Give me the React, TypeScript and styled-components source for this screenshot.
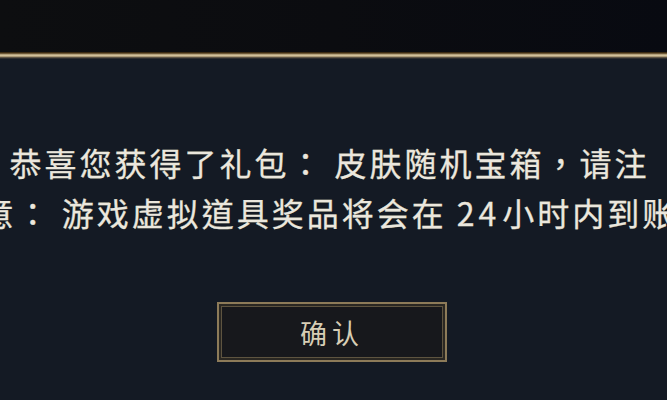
import React from "react";
import styled, { createGlobalStyle } from "styled-components";

const GlobalStyle = createGlobalStyle`
  html, body {
    margin: 0;
    padding: 0;
    background: #141a24;
    overflow: hidden;
  }
  #root {
    width: 667px;
    height: 400px;
  }
`;

const Screen = styled.div`
  width: 667px;
  height: 400px;
  display: flex;
  flex-direction: column;
  overflow: hidden;
  font-family: "Noto Sans CJK TC", "Noto Sans CJK SC", sans-serif;
`;

const TopBar = styled.div`
  height: 52px;
  flex-shrink: 0;
  background: linear-gradient(90deg, #0d0e10 0%, #0b0c10 50%, #080a11 100%);
`;

const GoldRule = styled.div`
  height: 7px;
  flex-shrink: 0;
  background: linear-gradient(
    180deg,
    #2a1d0c 0px,
    #4a3618 1px,
    #8f7a55 2px,
    #d9c9a4 3px,
    #cbb991 4px,
    #8c7b5e 5px,
    #2d2d2e 6px
  );
`;

const Dialog = styled.div`
  flex: 1;
  display: flex;
  flex-direction: column;
  align-items: center;
  background: #141a24;
  padding-top: 78px;
`;

const Message = styled.p`
  flex-shrink: 0;
  width: 706px;
  margin: 0 8px 0 0;
  text-align: center;
  color: #ebe7dd;
  font-size: 32px;
  line-height: 50px;
  letter-spacing: 3px;
  -webkit-text-stroke: 0.3px #ebe7dd;
`;

const Digits = styled.span`
  margin: 0 2px 0 10px;
  letter-spacing: 4px;
`;

const ConfirmButton = styled.button`
  margin: 65px 4px 0 0;
  width: 230px;
  height: 60px;
  box-sizing: border-box;
  background: #17181c;
  border: 2px solid #8d7b59;
  box-shadow: inset 0 0 0 2px #2a2722, inset 0 0 0 3px #5e5440;
  color: #d6cdb5;
  font-family: "Noto Sans CJK SC", sans-serif;
  font-size: 27px;
  letter-spacing: 5px;
  padding: 0 0 0 1px;
  cursor: pointer;
`;

export default function App() {
  return (
    <>
      <GlobalStyle />
      <Screen>
        <TopBar />
        <GoldRule />
        <Dialog>
          <Message>
            恭喜您获得了礼包： 皮肤随机宝箱，请注意： 游戏虚拟道具奖品将会在<Digits>24</Digits>小时内到账
          </Message>
          <ConfirmButton>确认</ConfirmButton>
        </Dialog>
      </Screen>
    </>
  );
}
